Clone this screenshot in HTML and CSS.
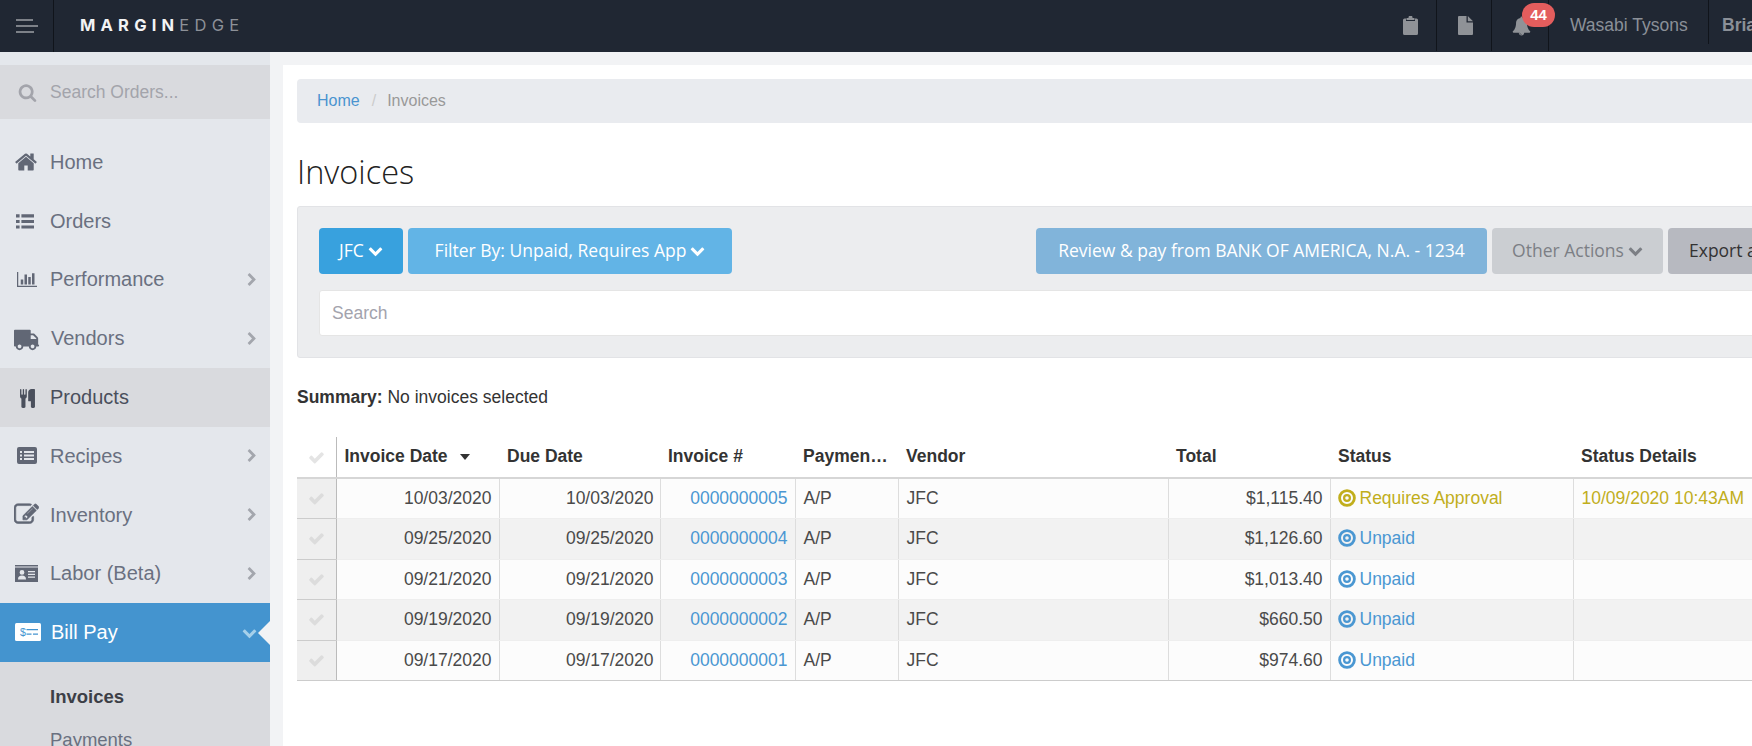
FILE: index.html
```html
<!DOCTYPE html>
<html lang="en">
<head>
<meta charset="utf-8">
<title>Invoices - MarginEdge</title>
<link rel="stylesheet" href="styles.css">
</head>
<body>
<svg class="sprite" aria-hidden="true">
  <symbol id="i-home" viewBox="0 0 1792 1792"><path d="M1472 992v480q0 26-19 45t-45 19h-384v-384h-256v384h-384q-26 0-45-19t-19-45v-480q0-1 .5-3t.5-3l575-474 575 474q1 2 1 6zm223-69l-62 74q-8 9-21 11h-3q-13 0-21-7l-692-577-692 577q-12 8-24 7-13-2-21-11l-62-74q-8-10-7-23.500t11-21.500l719-599q32-26 76-26t76 26l244 204v-195q0-14 9-23t23-9h192q14 0 23 9t9 23v408l219 182q10 8 11 21.500t-7 23.500z"/></symbol>
  <symbol id="i-list" viewBox="0 0 20 16"><path d="M0 0h4v3.500H0zM6 0h14v3.500H6zM0 6.200h4v3.500H0zM6 6.200h14v3.500H6zM0 12.400h4v3.500H0zM6 12.400h14v3.500H6z"/></symbol>
  <symbol id="i-bars" viewBox="0 128 2048 1536"><path d="M640 896v512h-256v-512h256zm384-512v1024h-256v-1024h256zm1024 1152v128h-2048v-1536h128v1408h1920zm-640-896v768h-256v-768h256zm384-384v1152h-256v-1152h256z"/></symbol>
  <symbol id="i-truck" viewBox="0 0 1792 1792"><path transform="matrix(-1 0 0 1 1792 0)" d="M640 1408q0-52-38-90t-90-38-90 38-38 90 38 90 90 38 90-38 38-90zm-384-512h384v-256h-158q-13 0-22 9l-195 195q-9 9-9 22v30zm1280 512q0-52-38-90t-90-38-90 38-38 90 38 90 90 38 90-38 38-90zm256-1088v1024q0 15-4 26.500t-13.500 18.500-16.500 11.500-23.500 6-22.500 2-25.500 0-22.500-.5q0 106-75 181t-181 75-181-75-75-181h-384q0 106-75 181t-181 75-181-75-75-181h-64q-3 0-22.500.5t-25.500 0-22.500-2-23.500-6-16.500-11.500-13.500-18.500-4-26.500q0-26 19-45t45-19v-320q0-8-.5-35t0-38 2.500-34.500 6.500-37 14-30.500 22.500-30l198-198q19-19 50.500-32t58.500-13h160v-192q0-26 19-45t45-19h1024q26 0 45 19t19 45z"/></symbol>
  <symbol id="i-cutlery" viewBox="0 0 1792 1792"><path d="M832 64v640q0 61-35.500 111t-92.500 70v779q0 52-38 90t-90 38h-128q-52 0-90-38t-38-90v-779q-57-20-92.500-70t-35.500-111v-640q0-26 19-45t45-19 45 19 19 45v416q0 26 19 45t45 19 45-19 19-45v-416q0-26 19-45t45-19 45 19 19 45v416q0 26 19 45t45 19 45-19 19-45v-416q0-26 19-45t45-19 45 19 19 45zm768 0v1600q0 52-38 90t-90 38h-128q-52 0-90-38t-38-90v-512h-224q-13 0-22.500-9.500t-9.500-22.500v-800q0-132 94-226t226-94h256q26 0 45 19t19 45z"/></symbol>
  <symbol id="i-listalt" viewBox="0 0 20 17"><path fill-rule="evenodd" d="M2 0h16a2 2 0 0 1 2 2v13a2 2 0 0 1-2 2H2a2 2 0 0 1-2-2V2a2 2 0 0 1 2-2zM3 4v2h2V4zm4 0v2h10V4zM3 7.500v2h2v-2zm4 0v2h10v-2zM3 11v2h2v-2zm4 0v2h10v-2z"/></symbol>
  <symbol id="i-edit" viewBox="0 0 1792 1792"><path d="M888 1184l116-116-152-152-116 116v56h96v96h56zm440-720q-16-16-33 1l-350 350q-17 17-1 33t33-1l350-350q17-17 1-33zm80 594v190q0 119-84.500 203.500t-203.500 84.500h-832q-119 0-203.500-84.500t-84.500-203.500v-832q0-119 84.500-203.500t203.500-84.500h832q63 0 117 25 15 7 18 23 3 17-9 29l-49 49q-14 14-32 8-23-6-45-6h-832q-66 0-113 47t-47 113v832q0 66 47 113t113 47h832q66 0 113-47t47-113v-126q0-13 9-22l64-64q15-15 35-7t20 29zm-96-738l288 288-672 672h-288v-288zm444 132l-92 92-288-288 92-92q28-28 68-28t68 28l152 152q28 28 28 68t-28 68z"/></symbol>
  <symbol id="i-card" viewBox="0 0 23 17"><path fill-rule="evenodd" d="M0 0h23v17H0zM0 1.400v1h23v-1zM7 5a2.400 2.400 0 1 0 0 4.800A2.400 2.400 0 0 0 7 5zM3 14.500h8c0-3-1.500-4-4-4s-4 1-4 4zM13 6v1.300h7V6zM13 8.700V10h7V8.700zM13 11.400v1.300h7v-1.300z"/></symbol>
  <symbol id="i-search" viewBox="0 0 1792 1792"><path d="M1216 832q0-185-131.500-316.500t-316.500-131.500-316.500 131.500-131.500 316.500 131.500 316.500 316.500 131.500 316.500-131.500 131.500-316.500zm512 832q0 52-38 90t-90 38q-54 0-90-38l-343-342q-179 124-399 124-143 0-273.500-55.500t-225-150-150-225-55.500-273.500 55.500-273.500 150-225 225-150 273.500-55.500 273.500 55.500 225 150 150 225 55.500 273.500q0 220-124 399l343 343q37 37 37 90z"/></symbol>
  <symbol id="i-right" viewBox="0 0 1792 1792"><path d="M1363 877l-742 742q-19 19-45 19t-45-19l-166-166q-19-19-19-45t19-45l531-531-531-531q-19-19-19-45t19-45l166-166q19-19 45-19t45 19l742 742q19 19 19 45t-19 45z"/></symbol>
  <symbol id="i-down" viewBox="0 0 1792 1792"><path d="M1683 808l-742 741q-19 19-45 19t-45-19l-742-741q-19-19-19-45.500t19-45.500l166-165q19-19 45-19t45 19l531 531 531-531q19-19 45-19t45 19l166 165q19 19 19 45.500t-19 45.500z"/></symbol>
  <symbol id="i-check" viewBox="0 0 1792 1792"><path d="M1671 566q0 40-28 68l-724 724-136 136q-28 28-68 28t-68-28l-136-136-362-362q-28-28-28-68t28-68l136-136q28-28 68-28t68 28l294 295 656-657q28-28 68-28t68 28l136 136q28 28 28 68z"/></symbol>
  <symbol id="i-bell" viewBox="0 0 1792 1792"><path d="M912 1696q0-16-16-16-59 0-101.500-42.500t-42.500-101.500q0-16-16-16t-16 16q0 73 51.500 124.500t124.500 51.500q16 0 16-16zm816-288q0 52-38 90t-90 38h-448q0 106-75 181t-181 75-181-75-75-181h-448q-52 0-90-38t-38-90q50-42 91-88t85-119.500 74.500-158.500 50-206 19.500-260q0-152 117-282.500t307-158.500q-8-19-8-39 0-40 28-68t68-28 68 28 28 68q0 20-8 39 190 28 307 158.500t117 282.500q0 139 19.500 260t50 206 74.500 158.500 85 119.500 91 88z"/></symbol>
  <symbol id="i-clip" viewBox="0 0 15 19"><path d="M5.500 2V1.500a2 2 0 0 1 4 0V2h2v2h-8V2z"/><path d="M1.500 2.500H3V5h9V2.500h1.500A1.500 1.500 0 0 1 15 4v13.500a1.500 1.500 0 0 1-1.500 1.500h-12A1.500 1.500 0 0 1 0 17.500V4a1.500 1.500 0 0 1 1.500-1.500z"/></symbol>
  <symbol id="i-file" viewBox="0 0 15 19"><path d="M1 0h7.500v6.500H15V18a1 1 0 0 1-1 1H1a1 1 0 0 1-1-1V1a1 1 0 0 1 1-1z"/><path d="M9.800 0L15 5.200H9.800z"/></symbol>
  <symbol id="i-dot" viewBox="0 0 18 18"><circle cx="9" cy="9" r="7.400" fill="none" stroke="currentColor" stroke-width="2.800"/><circle cx="9" cy="9" r="2.900" fill="none" stroke="currentColor" stroke-width="2.200"/></symbol>
</svg>

<div class="app">
  <header class="topbar">
    <button class="menu-btn" type="button" aria-label="Menu">
      <span class="bar bar-top"></span><span class="bar"></span><span class="bar bar-short"></span>
    </button>
    <div class="logo"><span class="logo-strong">MARGIN</span><span class="logo-light">EDGE</span></div>
    <div class="top-right">
      <div class="top-cell cell-clip"><svg class="top-icon"><use href="#i-clip"/></svg></div>
      <div class="top-cell cell-file"><svg class="top-icon"><use href="#i-file"/></svg></div>
      <div class="top-cell cell-bell"><svg class="top-icon bell"><use href="#i-bell"/></svg><span class="badge">44</span></div>
      <div class="top-cell cell-rest">Wasabi Tysons</div>
      <div class="top-user">Brian</div>
    </div>
  </header>

  <div class="shell">
    <aside class="sidebar">
      <div class="side-search">
        <svg class="side-search-icon"><use href="#i-search"/></svg>
        <span>Search Orders...</span>
      </div>
      <nav class="nav">
        <a class="nav-item"><svg class="nav-icon"><use href="#i-home"/></svg><span class="nav-label">Home</span></a>
        <a class="nav-item"><svg class="nav-icon icon-list"><use href="#i-list"/></svg><span class="nav-label">Orders</span></a>
        <a class="nav-item"><svg class="nav-icon icon-bars"><use href="#i-bars"/></svg><span class="nav-label">Performance</span><svg class="nav-chev"><use href="#i-right"/></svg></a>
        <a class="nav-item"><svg class="nav-icon icon-truck"><use href="#i-truck"/></svg><span class="nav-label label-shift">Vendors</span><svg class="nav-chev"><use href="#i-right"/></svg></a>
        <a class="nav-item is-hover"><svg class="nav-icon icon-cutlery"><use href="#i-cutlery"/></svg><span class="nav-label">Products</span></a>
        <a class="nav-item"><svg class="nav-icon icon-listalt"><use href="#i-listalt"/></svg><span class="nav-label">Recipes</span><svg class="nav-chev"><use href="#i-right"/></svg></a>
        <a class="nav-item"><svg class="nav-icon icon-edit"><use href="#i-edit"/></svg><span class="nav-label">Inventory</span><svg class="nav-chev"><use href="#i-right"/></svg></a>
        <a class="nav-item"><svg class="nav-icon icon-card"><use href="#i-card"/></svg><span class="nav-label">Labor (Beta)</span><svg class="nav-chev"><use href="#i-right"/></svg></a>
        <a class="nav-item is-active">
          <svg class="bill-icon" viewBox="0 0 26 18"><rect width="26" height="18" rx="1.500" fill="#fff"/><text x="5" y="12.500" class="bill-dollar">$</text><path d="M11.500 6h11.500v1.300H11.500zM11.500 10.500h5v1.300h-5zM18 10.500h5v1.300h-5z" fill="#4494cf"/></svg>
          <span class="nav-label label-shift">Bill Pay</span>
          <svg class="nav-chev-down"><use href="#i-down"/></svg>
          <span class="notch"></span>
        </a>
      </nav>
      <div class="subnav">
        <a class="sub-item is-current">Invoices</a>
        <a class="sub-item">Payments</a>
      </div>
    </aside>

    <main class="main">
      <div class="page">
        <div class="crumbs"><a class="crumb-link">Home</a><span class="crumb-sep">/</span><span class="crumb-now">Invoices</span></div>
        <h1 class="title">Invoices</h1>

        <section class="panel">
          <div class="toolbar">
            <button class="btn btn-vendor" type="button">JFC <svg class="btn-chev"><use href="#i-down"/></svg></button>
            <button class="btn btn-filter" type="button">Filter By: Unpaid, Requires App <svg class="btn-chev"><use href="#i-down"/></svg></button>
            <button class="btn btn-pay" type="button">Review &amp; pay from BANK OF AMERICA, N.A. - 1234</button>
            <button class="btn btn-other" type="button">Other Actions <svg class="btn-chev"><use href="#i-down"/></svg></button>
            <button class="btn btn-export" type="button">Export all</button>
          </div>
          <div class="search-box">Search</div>
        </section>

        <p class="summary"><strong>Summary:</strong> No invoices selected</p>

        <table class="grid">
          <colgroup>
            <col class="c-check"><col class="c-date"><col class="c-due"><col class="c-num"><col class="c-pay"><col class="c-vendor"><col class="c-total"><col class="c-status"><col class="c-details">
          </colgroup>
          <thead>
            <tr>
              <th class="check-head"><svg class="check"><use href="#i-check"/></svg></th>
              <th>Invoice Date <span class="caret"></span></th>
              <th>Due Date</th>
              <th>Invoice #</th>
              <th>Payment Terms</th>
              <th>Vendor</th>
              <th>Total</th>
              <th>Status</th>
              <th>Status Details</th>
            </tr>
          </thead>
          <tbody>
            <tr>
              <td class="check-cell"><svg class="check"><use href="#i-check"/></svg></td>
              <td class="num">10/03/2020</td><td class="num num-due">10/03/2020</td><td class="num"><a class="link">0000000005</a></td><td>A/P</td><td>JFC</td><td class="num">$1,115.40</td>
              <td class="st-warn"><svg class="dot"><use href="#i-dot"/></svg>Requires Approval</td><td class="st-warn">10/09/2020 10:43AM</td>
            </tr>
            <tr>
              <td class="check-cell"><svg class="check"><use href="#i-check"/></svg></td>
              <td class="num">09/25/2020</td><td class="num num-due">09/25/2020</td><td class="num"><a class="link">0000000004</a></td><td>A/P</td><td>JFC</td><td class="num">$1,126.60</td>
              <td class="st-info"><svg class="dot"><use href="#i-dot"/></svg>Unpaid</td><td></td>
            </tr>
            <tr>
              <td class="check-cell"><svg class="check"><use href="#i-check"/></svg></td>
              <td class="num">09/21/2020</td><td class="num num-due">09/21/2020</td><td class="num"><a class="link">0000000003</a></td><td>A/P</td><td>JFC</td><td class="num">$1,013.40</td>
              <td class="st-info"><svg class="dot"><use href="#i-dot"/></svg>Unpaid</td><td></td>
            </tr>
            <tr>
              <td class="check-cell"><svg class="check"><use href="#i-check"/></svg></td>
              <td class="num">09/19/2020</td><td class="num num-due">09/19/2020</td><td class="num"><a class="link">0000000002</a></td><td>A/P</td><td>JFC</td><td class="num">$660.50</td>
              <td class="st-info"><svg class="dot"><use href="#i-dot"/></svg>Unpaid</td><td></td>
            </tr>
            <tr>
              <td class="check-cell"><svg class="check"><use href="#i-check"/></svg></td>
              <td class="num">09/17/2020</td><td class="num num-due">09/17/2020</td><td class="num"><a class="link">0000000001</a></td><td>A/P</td><td>JFC</td><td class="num">$974.60</td>
              <td class="st-info"><svg class="dot"><use href="#i-dot"/></svg>Unpaid</td><td></td>
            </tr>
          </tbody>
        </table>
      </div>
    </main>
  </div>
</div>
</body>
</html>
```
FILE: styles.css
```css
* { box-sizing: border-box; }
html, body { margin: 0; height: 100%; overflow: hidden; }
body { font-family: "Liberation Sans", Arial, sans-serif; font-size: 17.5px; color: #444; background: #fff; }
svg { fill: currentColor; display: block; }
.sprite { display: none; }

.app { height: 746px; display: flex; flex-direction: column; overflow: hidden; }

/* top bar */
.topbar { height: 52px; flex: none; display: flex; align-items: stretch; background: #202733; }
.menu-btn { width: 54px; flex: none; display: flex; flex-direction: column; justify-content: center; gap: 4.500px; padding: 0 0 0 16px; margin: 0; background: none; border: 0; border-right: 1px solid #10141b; }
.bar { display: block; width: 22px; height: 1.500px; background: #7d8188; }
.bar-top { width: 17px; }
.bar-short { width: 18px; }
.logo { margin-left: 26px; align-self: center; font-family: Inter, "Liberation Sans", sans-serif; font-size: 16.500px; white-space: nowrap; margin-top: -2px; }
.logo-strong { color: #f2f3f4; font-weight: 700; letter-spacing: 5.200px; }
.logo-light { color: #8d9198; font-weight: 400; letter-spacing: 5.300px; }
.top-right { margin-left: auto; display: flex; align-items: stretch; }
.top-cell { position: relative; display: flex; align-items: center; border-right: 1px solid #10141b; height: 51px; }
.cell-clip { width: 55px; padding-left: 21px; }
.cell-file { width: 55px; padding-left: 21px; }
.cell-bell { width: 57px; padding-left: 20px; }
.cell-rest { width: 160px; padding-left: 21px; color: #8b9098; height: 44px; border-right: 1px solid #10141b; padding-top: 7px; }
.top-icon { width: 15px; height: 19px; color: #8f9297; }
.bell { width: 19px; height: 20px; }
.badge { position: absolute; left: 30px; top: 3px; width: 33px; height: 24px; border-radius: 12px; background: #e35d5d; color: #fff; font-size: 15px; font-weight: 700; line-height: 24px; text-align: center; }
.top-user { width: 43px; padding: 15px 0 0 13px; color: #8b9098; font-weight: 700; white-space: nowrap; overflow: hidden; }

.shell { flex: 1; display: flex; min-height: 0; }

/* sidebar */
.sidebar { width: 270px; flex: none; background: #e4e7ec; padding-top: 13px; overflow: hidden; }
.side-search { height: 54px; display: flex; align-items: center; background: #d9dade; color: #a3a4ab; padding-left: 18px; gap: 13px; }
.side-search-icon { width: 19px; height: 19px; }
.nav { margin-top: 14px; }
.nav-item { position: relative; height: 58.800px; display: flex; align-items: center; color: #6a7080; font-size: 20px; padding-left: 50px; }
.nav-label { white-space: nowrap; }
.label-shift { margin-left: 1px; }
.nav-icon { position: absolute; left: 14px; top: 50%; width: 24px; height: 24px; margin-top: -12px; color: #616775; }
.nav-item .icon-list { left: 16px; width: 18px; height: 15px; margin-top: -7px; }
.nav-item .icon-bars { left: 17px; width: 20px; height: 15px; margin-top: -8px; }
.nav-item .icon-truck { left: 14px; width: 26px; height: 26px; margin-top: -13px; }
.nav-item .icon-cutlery { left: 18px; width: 19px; height: 19px; margin-top: -9px; color: #4a4f5c; }
.nav-item .icon-listalt { left: 17px; width: 20px; height: 17px; margin-top: -9px; }
.nav-item .icon-edit { left: 14px; width: 25px; height: 25px; margin-top: -13px; stroke: currentColor; stroke-width: 45px; }
.nav-item .icon-card { left: 15px; width: 23px; height: 17px; margin-top: -9px; }
.nav-chev { position: absolute; left: 245px; top: 50%; width: 14px; height: 14px; margin-top: -7px; color: #a3a6ad; }
.is-hover { background: #d9dade; color: #4a4f5c; }
.is-active { background: #4494cf; color: #fff; }
.bill-icon { position: absolute; left: 15px; top: 50%; width: 26px; height: 18px; margin-top: -10px; }
.bill-dollar { font-family: "Liberation Sans", sans-serif; font-size: 10.500px; fill: #4494cf; }
.nav-chev-down { position: absolute; left: 242px; top: 50%; width: 15px; height: 15px; margin-top: -8px; color: #a6d0ea; }
.notch { position: absolute; right: 0; top: 50%; margin-top: -12px; width: 0; height: 0; border-style: solid; border-width: 12px 12px 12px 0; border-color: transparent #f2f3f5 transparent transparent; }
.subnav { background: #d9dade; padding: 21px 0 0 50px; height: 100px; }
.sub-item { display: block; height: 43px; line-height: 28px; font-size: 18.500px; color: #6a7080; }
.sub-item.is-current { color: #3d3f47; font-weight: 700; }

/* main */
.main { flex: 1; min-width: 0; background: #f2f3f5; padding: 13px 0 0 13px; overflow: hidden; }
.page { width: 1600px; height: 700px; background: #fff; padding: 14px 0 0 14px; }
.crumbs { height: 44px; background: #e9ebef; border-radius: 4px; display: flex; align-items: center; padding-left: 20px; font-size: 16px; }
.crumb-link { color: #4a94d0; }
.crumb-sep { color: #ccc; margin: 0 11px 0 12px; }
.crumb-now { color: #999; }
.title { margin: 27px 0 12px; font-family: "Open Sans", sans-serif; font-weight: 300; font-size: 32.500px; line-height: 44px; color: #222; }

.panel { background: #ecedef; border: 1px solid #e2e3e6; border-radius: 3px; padding: 21px; height: 152px; }
.toolbar { display: flex; gap: 5px; height: 46px; }
.btn { height: 46px; margin: 0; padding: 0 0 2px; border: 0; border-radius: 4px; font-family: "Open Sans", sans-serif; font-size: 17.500px; color: #fff; display: flex; align-items: center; justify-content: center; gap: 4px; white-space: nowrap; flex: none; }
.btn-chev { width: 15px; height: 15px; }
.btn-vendor { background: #38a1de; width: 84px; }
.btn-filter { background: #62b4e6; width: 324px; }
.btn-pay { background: #81b4da; margin-left: 299px; width: 451px; }
.btn-other { background: #cbced2; color: #7c7f85; width: 171px; }
.btn-export { background: #b7b9c0; color: #333; padding: 0 21px 2px; justify-content: flex-start; }
.search-box { margin-top: 16px; height: 46px; background: #fff; border: 1px solid #e5e5e5; border-radius: 3px; padding-left: 12px; line-height: 44px; color: #a3a3ad; }

.summary { margin: 29px 0 30px; line-height: 20px; color: #333; }

.grid { border-collapse: collapse; table-layout: fixed; width: 1476px; }
.c-check { width: 39px; }
.c-date { width: 163px; }
.c-due { width: 161px; }
.c-num { width: 135px; }
.c-pay { width: 103px; }
.c-vendor { width: 270px; }
.c-total { width: 162px; }
.c-status { width: 243px; }
.c-details { width: 200px; }
.grid th { height: 41px; padding: 0 8px 2px; text-align: left; font-weight: 700; color: #333; border-bottom: 2px solid #d6d6d6; white-space: nowrap; overflow: hidden; text-overflow: ellipsis; }
.grid td { padding: 0 8px; color: #4a4a4a; border-left: 1px solid #ddd; border-bottom: 1px solid #eee; white-space: nowrap; }
.grid tbody tr:nth-child(odd) td { background: #fcfcfc; height: 40px; }
.grid tbody tr:nth-child(even) td { background: #f2f2f2; height: 41px; }
.grid tbody tr:last-child td { border-bottom: 1px solid #ccc; }
.grid th.check-head { padding: 0 0 0 11px; border-right: 1px solid #bbb; }
.grid td.check-cell { padding: 0 0 0 11px; border-left: 0; border-right: 1px solid #bbb; border-bottom: 1px solid #ccc; }
.grid tbody tr:nth-child(odd) td.check-cell, .grid tbody tr:nth-child(even) td.check-cell { background: #efefef; }
.check { width: 17px; height: 17px; color: #dcdcdc; }
.check-head .check { color: #e4e4e4; }
.grid td.num { text-align: right; padding-right: 7px; }
.grid td.num-due { padding-right: 6px; }
.link { color: #4a97d2; }
.caret { display: inline-block; margin: 0 0 2px 8px; width: 0; height: 0; border-style: solid; border-width: 6px 5.500px 0; border-color: #333 transparent transparent; }
.dot { display: inline-block; width: 18px; height: 18px; margin: 0 4px -3px -1px; }
.grid td.st-warn { color: #c1ae1c; }
.grid td.st-info { color: #4a97d2; }
```
